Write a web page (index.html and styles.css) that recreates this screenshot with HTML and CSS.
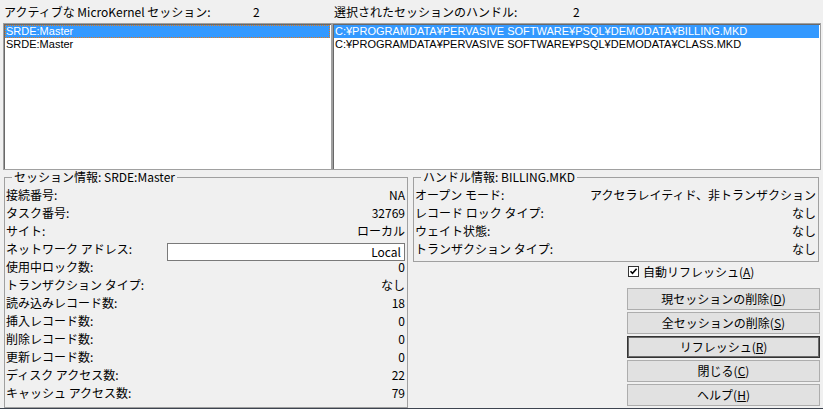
FILE: index.html
```html
<!DOCTYPE html>
<html lang="ja">
<head>
<meta charset="utf-8">
<title>MicroKernel セッション モニタ</title>
<link rel="stylesheet" href="styles.css">
</head>
<body>
<div class="window">
  <div class="top">
    <div class="pane">
      <div class="head"><span class="head-label left-label">アクティブな MicroKernel セッション:</span><span class="count">2</span></div>
      <div class="listbox">
        <div class="item selected focused">SRDE:Master</div>
        <div class="item">SRDE:Master</div>
      </div>
    </div>
    <div class="pane">
      <div class="head head-right"><span class="head-label right-label">選択されたセッションのハンドル:</span><span class="count">2</span></div>
      <div class="listbox">
        <div class="item selected">C:¥PROGRAMDATA¥PERVASIVE SOFTWARE¥PSQL¥DEMODATA¥BILLING.MKD</div>
        <div class="item">C:¥PROGRAMDATA¥PERVASIVE SOFTWARE¥PSQL¥DEMODATA¥CLASS.MKD</div>
      </div>
    </div>
  </div>
  <div class="bottom">
    <fieldset class="group session">
      <legend>セッション情報: SRDE:Master</legend>
      <div class="row"><span>接続番号:</span><span class="val">NA</span></div>
      <div class="row"><span>タスク番号:</span><span class="val">32769</span></div>
      <div class="row"><span>サイト:</span><span class="val">ローカル</span></div>
      <div class="row"><span>ネットワーク アドレス:</span><div class="field">Local</div></div>
      <div class="row"><span>使用中ロック数:</span><span class="val">0</span></div>
      <div class="row"><span>トランザクション タイプ:</span><span class="val">なし</span></div>
      <div class="row"><span>読み込みレコード数:</span><span class="val">18</span></div>
      <div class="row"><span>挿入レコード数:</span><span class="val">0</span></div>
      <div class="row"><span>削除レコード数:</span><span class="val">0</span></div>
      <div class="row"><span>更新レコード数:</span><span class="val">0</span></div>
      <div class="row"><span>ディスク アクセス数:</span><span class="val">22</span></div>
      <div class="row"><span>キャッシュ アクセス数:</span><span class="val">79</span></div>
    </fieldset>
    <div class="right-col">
      <fieldset class="group handle">
        <legend>ハンドル情報: BILLING.MKD</legend>
        <div class="row"><span>オープン モード:</span><span class="val">アクセラレイティド、非トランザクション</span></div>
        <div class="row"><span>レコード ロック タイプ:</span><span class="val">なし</span></div>
        <div class="row"><span>ウェイト状態:</span><span class="val">なし</span></div>
        <div class="row"><span>トランザクション タイプ:</span><span class="val">なし</span></div>
      </fieldset>
      <div class="actions">
        <div class="check">
          <svg class="box" width="11" height="11" viewBox="0 0 11 11"><rect x="0.5" y="0.5" width="10" height="10" fill="#fff" stroke="#333"/><path d="M2.5 5.2 L4.5 7.3 L8.6 2.8" fill="none" stroke="#000" stroke-width="1.6"/></svg>
          <span>自動リフレッシュ(<u>A</u>)</span>
        </div>
        <button class="btn">現セッションの削除(<u>D</u>)</button>
        <button class="btn">全セッションの削除(<u>S</u>)</button>
        <button class="btn default">リフレッシュ(<u>R</u>)</button>
        <button class="btn">閉じる(<u>C</u>)</button>
        <button class="btn">ヘルプ(<u>H</u>)</button>
      </div>
    </div>
  </div>
</div>
</body>
</html>
```
FILE: styles.css
```css
html, body {
  margin: 0;
  padding: 0;
  background: #f0f0f0;
}
body {
  font-family: "Noto Sans CJK JP", "Liberation Sans", sans-serif;
  font-size: 12px;
  color: #000;
  width: 823px;
  height: 409px;
  overflow: hidden;
}
.window {
  box-sizing: border-box;
  height: 409px;
  border-bottom: 1px solid #3d4450;
}
.top {
  display: grid;
  grid-template-columns: 329px 489px;
  padding-left: 3px;
}
.head {
  height: 23px;
  display: flex;
  align-items: center;
  padding-left: 1px;
  line-height: 14px;
  white-space: nowrap;
}
.head-right { padding-left: 2px; }
.left-label { width: 249px; }
.right-label { width: 239px; }
.listbox {
  box-sizing: border-box;
  height: 147px;
  background: #fff;
  border: 1px solid #a0a0a0;
  box-shadow: inset 1px 1px 0 #696969;
  padding: 1px;
  overflow: hidden;
}
.item {
  height: 13px;
  line-height: 13px;
  padding-left: 1px;
  font-family: "Liberation Sans", "Noto Sans CJK JP", sans-serif;
  font-size: 11px;
  white-space: nowrap;
}
.item.selected {
  background: #3399ff;
  color: #fff;
}
.item.focused {
  outline: 1px dotted #e07a1f;
  outline-offset: -1px;
}
.bottom {
  display: grid;
  grid-template-columns: 404px 407px;
  column-gap: 5px;
  padding-left: 4px;
}
.group {
  margin: 0;
  min-width: 0;
  border: 1px solid #a0a0a0;
  padding: 2px 2px 2px 1px;
}
.group legend {
  padding: 0 2px;
  margin-left: 6px;
  line-height: 14px;
  height: 14px;
  white-space: nowrap;
}
.row {
  height: 18px;
  display: flex;
  justify-content: space-between;
  align-items: center;
  line-height: 18px;
  white-space: nowrap;
}
.field {
  box-sizing: border-box;
  align-self: flex-start;
  margin-top: 3px;
  width: 238px;
  height: 18px;
  line-height: 16px;
  background: #fff;
  border: 1px solid #7a7a7a;
  text-align: right;
  padding-right: 3px;
  position: relative;
  z-index: 1;
}
.right-col {
  display: flex;
  flex-direction: column;
}
.handle {
  margin-right: 1px;
  padding-bottom: 3px;
}
.actions {
  display: flex;
  flex-direction: column;
  align-items: flex-end;
  padding-top: 1px;
}
.check {
  width: 192px;
  height: 16px;
  display: flex;
  align-items: center;
  gap: 4px;
  margin-bottom: 9px;
  white-space: nowrap;
}
.box { flex: none; }
.btn {
  box-sizing: border-box;
  width: 193px;
  height: 22px;
  margin: 0 0 2px 0;
  padding: 0;
  font: inherit;
  line-height: 20px;
  color: #000;
  background: #e1e1e1;
  border: 1px solid #adadad;
  text-align: center;
}
.btn.default {
  border: 1px solid #333;
  box-shadow: inset 0 0 0 1px #6a6a6a;
}
u { text-underline-offset: 1px; }
```
